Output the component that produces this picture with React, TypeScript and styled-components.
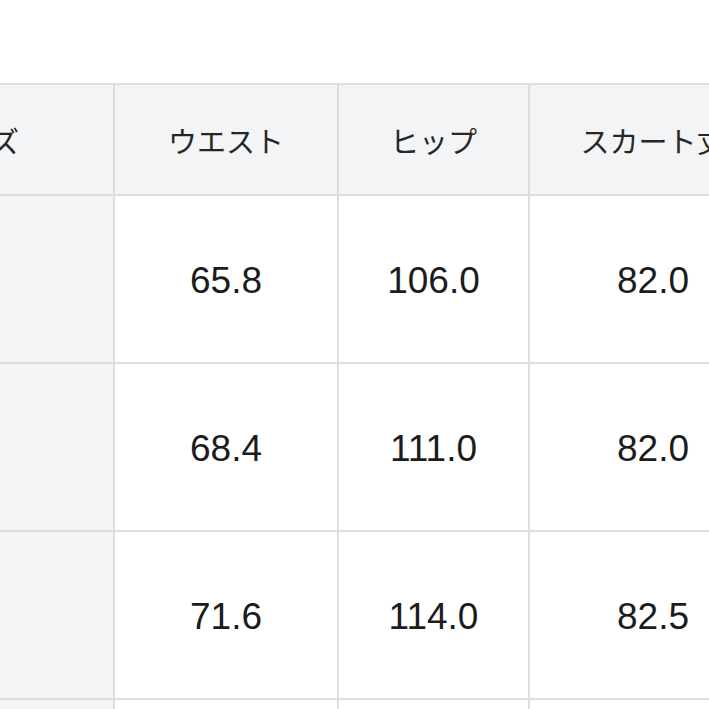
import styled, { createGlobalStyle } from 'styled-components'

const GlobalStyle = createGlobalStyle`
    html, body {
        margin: 0;
        padding: 0;
        background: #ffffff;
        overflow: hidden;
    }
    body {
        font-family: "Liberation Sans", "Noto Sans CJK JP", sans-serif;
        color: #1c1c1c;
    }
`

const Page = styled.main`
    width: 709px;
    height: 709px;
    overflow: hidden;
    padding-top: 83px;
    box-sizing: border-box;
`

const SizeTable = styled.div`
    display: grid;
    grid-template-columns: 274px 222px 189px 246px;
    grid-auto-rows: 166px;
    grid-template-rows: 109px;
    gap: 2px;
    padding: 2px 0;
    margin-left: -161px;
    width: max-content;
    background: #dcdfe1;
`

const Cell = styled.div<{ $head?: boolean; $shaded?: boolean }>`
    display: flex;
    align-items: center;
    justify-content: center;
    padding-top: ${p => (p.$head ? '1px' : '3px')};
    background: ${p => (p.$head || p.$shaded ? '#f3f4f5' : '#ffffff')};
    font-family: ${p => (p.$head ? '"Noto Sans CJK JP", sans-serif' : '"Liberation Sans", Arial, sans-serif')};
    font-size: ${p => (p.$head ? '29px' : '37px')};
    color: ${p => (p.$head ? '#262626' : '#1c1c1c')};
    white-space: nowrap;
    overflow: hidden;
`

const headers = ['サイズ', 'ウエスト', 'ヒップ', 'スカート丈']

const rows = [
    ['S', '65.8', '106.0', '82.0'],
    ['M', '68.4', '111.0', '82.0'],
    ['L', '71.6', '114.0', '82.5'],
    ['XL', '74.8', '117.0', '83.0'],
]

const App = () => (
    <>
        <GlobalStyle />
        <Page>
            <SizeTable>
                {headers.map(h => (
                    <Cell $head key={h}>{h}</Cell>
                ))}
                {rows.map(row =>
                    row.map((v, i) => (
                        <Cell $shaded={i === 0} key={row[0] + i}>{v}</Cell>
                    ))
                )}
            </SizeTable>
        </Page>
    </>
)

export default App
